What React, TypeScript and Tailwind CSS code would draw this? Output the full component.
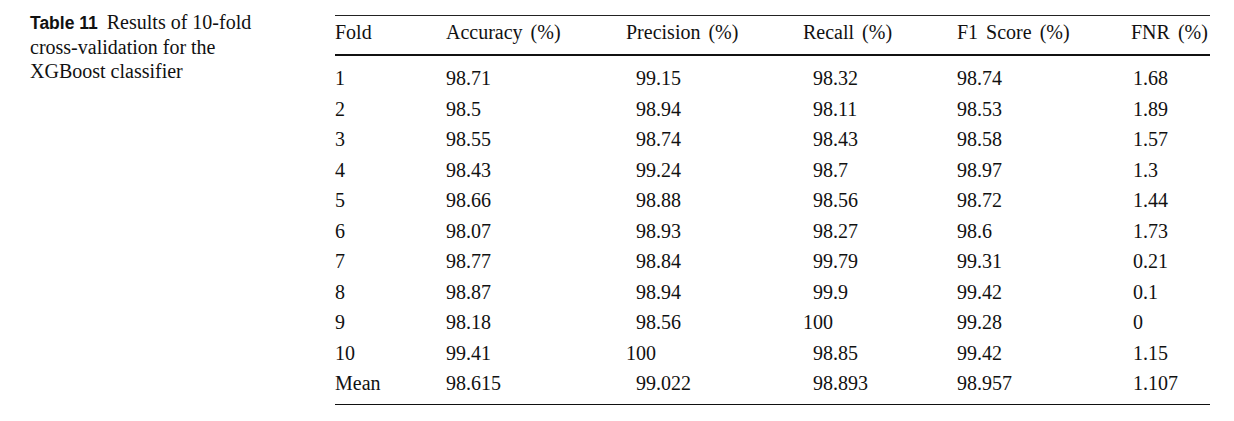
import React from "react";

const headers = ["Fold", "Accuracy (%)", "Precision (%)", "Recall (%)", "F1 Score (%)", "FNR (%)"];

const rows: string[][] = [
  ["1", "98.71", "99.15", "98.32", "98.74", "1.68"],
  ["2", "98.5", "98.94", "98.11", "98.53", "1.89"],
  ["3", "98.55", "98.74", "98.43", "98.58", "1.57"],
  ["4", "98.43", "99.24", "98.7", "98.97", "1.3"],
  ["5", "98.66", "98.88", "98.56", "98.72", "1.44"],
  ["6", "98.07", "98.93", "98.27", "98.6", "1.73"],
  ["7", "98.77", "98.84", "99.79", "99.31", "0.21"],
  ["8", "98.87", "98.94", "99.9", "99.42", "0.1"],
  ["9", "98.18", "98.56", "100", "99.28", "0"],
  ["10", "99.41", "100", "98.85", "99.42", "1.15"],
  ["Mean", "98.615", "99.022", "98.893", "98.957", "1.107"],
];

const serif = "font-['Liberation_Serif','Times_New_Roman',serif]";

function Cell({ value, col }: { value: string; col: number }) {
  // Precision and Recall columns: integer part right-aligned to 3 digits
  const indent = (col === 2 || col === 3) && value !== "100";
  const fnr = col === 5;
  return (
    <div
      className={
        "whitespace-nowrap " +
        (indent ? "pl-[0.5em] " : "") +
        (fnr ? "pl-[2px] " : "")
      }
    >
      {value}
    </div>
  );
}

export default function App() {
  return (
    <div className={`w-[1234px] h-[421px] bg-white text-[#111] ${serif} flex`}>
      <div className="w-[335px] shrink-0 pl-[30px] pt-[10px]">
        <p className="w-[240px] text-[20px] leading-[24.5px]">
          <span className="font-['Liberation_Sans','Arial',sans-serif] font-bold text-[17.5px] leading-[20px] mr-[9px]">
            Table 11
          </span>
          Results of 10-fold cross-validation for the XGBoost classifier
        </p>
      </div>
      <div className="w-[875px] shrink-0 pt-[15px] text-[20px]">
        <div className="border-t border-[#222]" />
        <div className="grid grid-cols-[111px_180px_177px_154px_174px_79px] pt-[5px] pb-[11px] leading-[22px] [word-spacing:3px]">
          {headers.map((h) => (
            <div key={h} className="whitespace-nowrap">
              {h}
            </div>
          ))}
        </div>
        <div className="border-t-2 border-[#111]" />
        <div className="pt-[7px] pb-[5px]">
          {rows.map((r, i) => (
            <div
              key={i}
              className="grid grid-cols-[111px_180px_177px_154px_174px_79px] h-[30.5px] items-center leading-[22px]"
            >
              {r.map((v, j) => (
                <Cell key={j} value={v} col={j} />
              ))}
            </div>
          ))}
        </div>
        <div className="border-t-[1.5px] border-[#111]" />
      </div>
    </div>
  );
}
